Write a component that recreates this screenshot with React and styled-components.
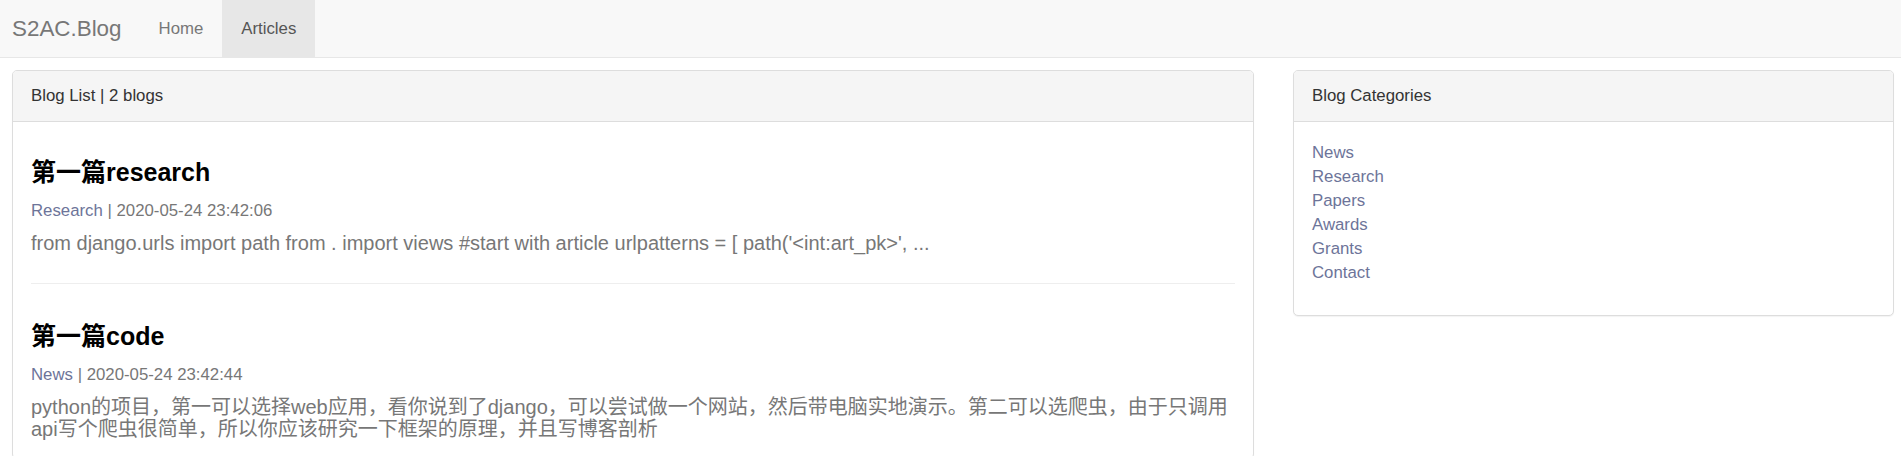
import React from "react";
import styled, { createGlobalStyle } from "styled-components";

const posts = [
  {
    title: "第一篇research",
    category: "Research",
    date: "2020-05-24 23:42:06",
    excerpt:
      "from django.urls import path from . import views #start with article urlpatterns = [ path('<int:art_pk>', ...",
  },
  {
    title: "第一篇code",
    category: "News",
    date: "2020-05-24 23:42:44",
    excerpt:
      "python的项目，第一可以选择web应用，看你说到了django，可以尝试做一个网站，然后带电脑实地演示。第二可以选爬虫，由于只调用api写个爬虫很简单，所以你应该研究一下框架的原理，并且写博客剖析",
  },
];

const categories = ["News", "Research", "Papers", "Awards", "Grants", "Contact"];

const App = () => {
  return (
    <>
      <GlobalStyle />
      <Navbar>
        <Brand href="#">S2AC.Blog</Brand>
        <NavLink href="#">Home</NavLink>
        <NavLink href="#" $active>
          Articles
        </NavLink>
      </Navbar>
      <Page>
        <Panel>
          <PanelHeading>Blog List | 2 blogs</PanelHeading>
          <PanelBody>
            {posts.map((post, i) => (
              <Post key={post.title} $last={i === posts.length - 1}>
                <PostTitle>{post.title}</PostTitle>
                <Meta>
                  <CategoryLink href="#">{post.category}</CategoryLink> | {post.date}
                </Meta>
                <Excerpt>{post.excerpt}</Excerpt>
              </Post>
            ))}
          </PanelBody>
        </Panel>
        <Side>
          <Panel>
            <PanelHeading>Blog Categories</PanelHeading>
            <SideBody>
              <CategoryList>
                {categories.map((c) => (
                  <li key={c}>
                    <CategoryLink href="#">{c}</CategoryLink>
                  </li>
                ))}
              </CategoryList>
            </SideBody>
          </Panel>
        </Side>
      </Page>
    </>
  );
};

const GlobalStyle = createGlobalStyle`
  * {
    box-sizing: border-box;
  }
  body {
    margin: 0;
    background: #fff;
    color: #333;
    font-family: "Liberation Sans", Arial, "Noto Sans CJK SC", sans-serif;
    font-size: 16.8px;
    line-height: 24px;
  }
`;

const Navbar = styled.nav`
  display: flex;
  align-items: stretch;
  height: 58px;
  background-color: #f8f8f8;
  border-bottom: 1px solid #e7e7e7;
`;

const Brand = styled.a`
  display: flex;
  align-items: center;
  padding: 0 18px 0 12px;
  font-size: 22.4px;
  color: #777;
  text-decoration: none;
`;

const NavLink = styled.a`
  display: flex;
  align-items: center;
  padding: 0 19px;
  font-size: 16.8px;
  color: ${(p) => (p.$active ? "#555" : "#777")};
  background-color: ${(p) => (p.$active ? "#e7e7e7" : "transparent")};
  text-decoration: none;
`;

const Page = styled.div`
  display: grid;
  grid-template-columns: 1242fr 601fr;
  column-gap: 39px;
  align-items: start;
  padding: 12px 7px 0 12px;
`;

const Side = styled.aside`
  min-width: 0;
`;

const Panel = styled.div`
  background: #fff;
  border: 1px solid #ddd;
  border-radius: 5px;
  box-shadow: 0 1px 1px rgba(0, 0, 0, 0.05);
  min-width: 0;
`;

const PanelHeading = styled.div`
  padding: 13px 18px;
  background-color: #f5f5f5;
  border-bottom: 1px solid #ddd;
  border-radius: 4px 4px 0 0;
  color: #333;
  font-size: 16.8px;
  line-height: 24px;
`;

const PanelBody = styled.div`
  padding: 18px;
`;

const SideBody = styled.div`
  padding: 19px 18px 30px;
`;

const Post = styled.article`
  padding-bottom: ${(p) => (p.$last ? "0" : "29px")};
  margin-bottom: ${(p) => (p.$last ? "0" : "37px")};
  border-bottom: ${(p) => (p.$last ? "none" : "1px solid #eee")};
`;

const PostTitle = styled.h3`
  margin: 17px 0 12px;
  font-size: 25px;
  line-height: 30px;
  font-weight: bold;
  color: #000;
`;

const Meta = styled.div`
  font-size: 16.8px;
  line-height: 24px;
  color: #777;
`;

const CategoryLink = styled.a`
  color: #6d7499;
  text-decoration: none;
`;

const Excerpt = styled.p`
  margin: 9px 0 0;
  font-size: 20px;
  line-height: 22px;
  color: #777;
`;

const CategoryList = styled.ul`
  list-style: none;
  margin: 0;
  padding: 0;
  font-size: 16.8px;
  line-height: 24px;
`;

export default App;
